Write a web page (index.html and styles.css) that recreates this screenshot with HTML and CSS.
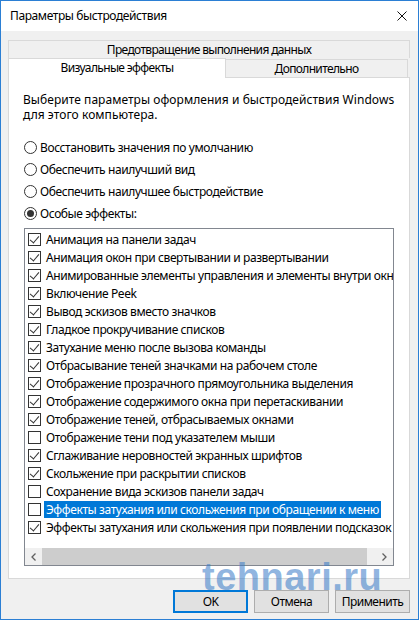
FILE: index.html
```html
<!DOCTYPE html>
<html lang="ru">
<head>
<meta charset="utf-8">
<title>Параметры быстродействия</title>
<link rel="stylesheet" href="styles.css">
</head>
<body>
<div class="window">
  <div class="titlebar">
    <span class="title">Параметры быстродействия</span>
    <svg class="close" width="10" height="10" viewBox="0 0 10 10"><path d="M0.5 0.5 L9.5 9.5 M9.5 0.5 L0.5 9.5" stroke="#111" stroke-width="1" fill="none"/></svg>
  </div>
  <div class="client">
    <div class="tabs">
      <div class="tabrow back">
        <div class="tab">Предотвращение выполнения данных</div>
      </div>
      <div class="tabrow front">
        <div class="tab active">Визуальные эффекты</div>
        <div class="tab other">Дополнительно</div>
      </div>
    </div>
    <div class="panel">
      <p class="desc">Выберите параметры оформления и быстродействия Windows<br>для этого компьютера.</p>
      <div class="radios">
        <div class="radio"><span class="rb"></span><span>Восстановить значения по умолчанию</span></div>
        <div class="radio"><span class="rb"></span><span>Обеспечить наилучший вид</span></div>
        <div class="radio"><span class="rb"></span><span>Обеспечить наилучшее быстродействие</span></div>
        <div class="radio"><span class="rb on"></span><span>Особые эффекты:</span></div>
      </div>
      <div class="listbox">
        <div class="items">
          <div class="item"><span class="cb on"></span><span class="lbl">Анимация на панели задач</span></div>
          <div class="item"><span class="cb on"></span><span class="lbl">Анимация окон при свертывании и развертывании</span></div>
          <div class="item"><span class="cb on"></span><span class="lbl">Анимированные элементы управления и элементы внутри окна</span></div>
          <div class="item"><span class="cb on"></span><span class="lbl">Включение Peek</span></div>
          <div class="item"><span class="cb on"></span><span class="lbl">Вывод эскизов вместо значков</span></div>
          <div class="item"><span class="cb on"></span><span class="lbl">Гладкое прокручивание списков</span></div>
          <div class="item"><span class="cb on"></span><span class="lbl">Затухание меню после вызова команды</span></div>
          <div class="item"><span class="cb on"></span><span class="lbl">Отбрасывание теней значками на рабочем столе</span></div>
          <div class="item"><span class="cb on"></span><span class="lbl">Отображение прозрачного прямоугольника выделения</span></div>
          <div class="item"><span class="cb on"></span><span class="lbl">Отображение содержимого окна при перетаскивании</span></div>
          <div class="item"><span class="cb on"></span><span class="lbl">Отображение теней, отбрасываемых окнами</span></div>
          <div class="item"><span class="cb"></span><span class="lbl">Отображение тени под указателем мыши</span></div>
          <div class="item"><span class="cb on"></span><span class="lbl">Сглаживание неровностей экранных шрифтов</span></div>
          <div class="item"><span class="cb on"></span><span class="lbl">Скольжение при раскрытии списков</span></div>
          <div class="item"><span class="cb"></span><span class="lbl">Сохранение вида эскизов панели задач</span></div>
          <div class="item"><span class="cb"></span><span class="lbl sel">Эффекты затухания или скольжения при обращении к меню</span></div>
          <div class="item"><span class="cb on"></span><span class="lbl">Эффекты затухания или скольжения при появлении подсказок</span></div>
        </div>
        <div class="hscroll">
          <div class="sbtn"><svg width="5" height="8" viewBox="0 0 5 8"><path d="M4.5 0.5 L1 4 L4.5 7.5" stroke="#606060" stroke-width="1.3" fill="none"/></svg></div>
          <div class="track"><div class="thumb"></div></div>
          <div class="sbtn"><svg width="5" height="8" viewBox="0 0 5 8"><path d="M0.5 0.5 L4 4 L0.5 7.5" stroke="#606060" stroke-width="1.3" fill="none"/></svg></div>
        </div>
      </div>
    </div>
    <div class="buttons">
      <div class="btn default">OK</div>
      <div class="btn">Отмена</div>
      <div class="btn">Применить</div>
    </div>
  </div>
  <div class="watermark">tehnari.ru</div>
</div>
</body>
</html>
```
FILE: styles.css
```css
* { box-sizing: border-box; }
html, body { margin: 0; padding: 0; background: #fff; }
body {
  font-family: "Noto Sans", "Open Sans", sans-serif;
  font-size: 12px;
  letter-spacing: -0.4px;
  color: #000;
}
.window {
  position: relative;
  width: 419px;
  height: 620px;
  border: 1px solid #2b7fd4;
  display: flex;
  flex-direction: column;
  background: #f0f0f0;
  overflow: hidden;
}
.titlebar {
  height: 30px;
  background: #fff;
  display: flex;
  align-items: center;
  justify-content: space-between;
  padding-left: 9px;
  padding-right: 11px;
}
.title { line-height: 16px; }
.close { display: block; }
.client {
  flex: 1;
  display: flex;
  flex-direction: column;
  padding: 9px 8px 0 7px;
}
.tabs { display: flex; flex-direction: column; }
.tabrow { display: flex; }
.tabrow.back { height: 18px; }
.tabrow.back .tab {
  flex: 1;
  border: 1px solid #d9d9d9;
  border-bottom: none;
  background: #f0f0f0;
}
.tab {
  display: flex;
  align-items: center;
  justify-content: center;
  line-height: 16px;
  letter-spacing: -0.65px;
}
.tabrow.front {
  height: 20px;
  margin-top: -1px;
  align-items: flex-end;
}
.tab.active {
  width: 218px;
  height: 20px;
  background: #fff;
  border: 1px solid #d9d9d9;
  border-bottom: none;
  margin-bottom: -1px;
  position: relative;
  z-index: 1;
  padding-bottom: 1px;
}
.tab.other {
  flex: 1;
  height: 18px;
  margin-right: 2px;
  background: #f0f0f0;
  border: 1px solid #d9d9d9;
  border-left: none;
  border-bottom: none;
}
.panel {
  height: 502px;
  background: #fff;
  border: 1px solid #d9d9d9;
  padding: 14px 14px 0 14px;
}
.desc {
  margin: 0;
  line-height: 15px;
  letter-spacing: 0.05px;
}
.radios {
  margin-top: 14px;
  padding-left: 1px;
}
.radio {
  height: 22px;
  display: flex;
  align-items: center;
  gap: 3px;
}
.rb {
  width: 13px;
  height: 13px;
  border: 1px solid #333;
  border-radius: 50%;
  background: #fff;
  display: flex;
  align-items: center;
  justify-content: center;
  flex: none;
}
.rb.on::after {
  content: "";
  width: 7px;
  height: 7px;
  border-radius: 50%;
  background: #333;
}
.listbox {
  margin-top: 4px;
  margin-left: 1px;
  width: 370px;
  height: 338px;
  border: 1px solid #828790;
  background: #fff;
  display: flex;
  flex-direction: column;
}
.items {
  flex: 1;
  padding-top: 1px;
  padding-left: 3px;
  overflow: hidden;
}
.item {
  height: 18px;
  display: flex;
  align-items: center;
  white-space: nowrap;
}
.cb {
  width: 13px;
  height: 13px;
  border: 1px solid #333;
  background: #fff;
  flex: none;
  position: relative;
}
.cb.on::after {
  content: "";
  position: absolute;
  left: 3px;
  top: 0px;
  width: 4px;
  height: 8px;
  border-right: 1px solid #333;
  border-bottom: 1px solid #333;
  transform: rotate(40deg);
}
.lbl {
  margin-left: 3px;
  padding: 0 2px;
  line-height: 17px;
  height: 17px;
}
.lbl.sel {
  background: #0078d7;
  color: #fff;
}
.hscroll {
  height: 17px;
  display: flex;
  background: #f0f0f0;
}
.sbtn {
  width: 17px;
  display: flex;
  align-items: center;
  justify-content: center;
  flex: none;
}
.track { flex: 1; display: flex; }
.thumb {
  width: 325px;
  background: #cdcdcd;
}
.buttons {
  margin-top: 11px;
  display: flex;
  justify-content: flex-end;
  gap: 6px;
}
.btn {
  width: 75px;
  height: 23px;
  background: #e1e1e1;
  border: 1px solid #adadad;
  display: flex;
  align-items: center;
  justify-content: center;
  letter-spacing: -0.55px;
}
.btn.default {
  border: 2px solid #0078d7;
}
.watermark {
  position: absolute;
  left: 201px;
  top: 563px;
  height: 26px;
  line-height: 26px;
  font-family: "Liberation Sans", Arial, sans-serif;
  font-weight: bold;
  font-size: 38px;
  letter-spacing: 0.5px;
  color: rgba(60, 125, 200, 0.58);
  pointer-events: none;
}
```
